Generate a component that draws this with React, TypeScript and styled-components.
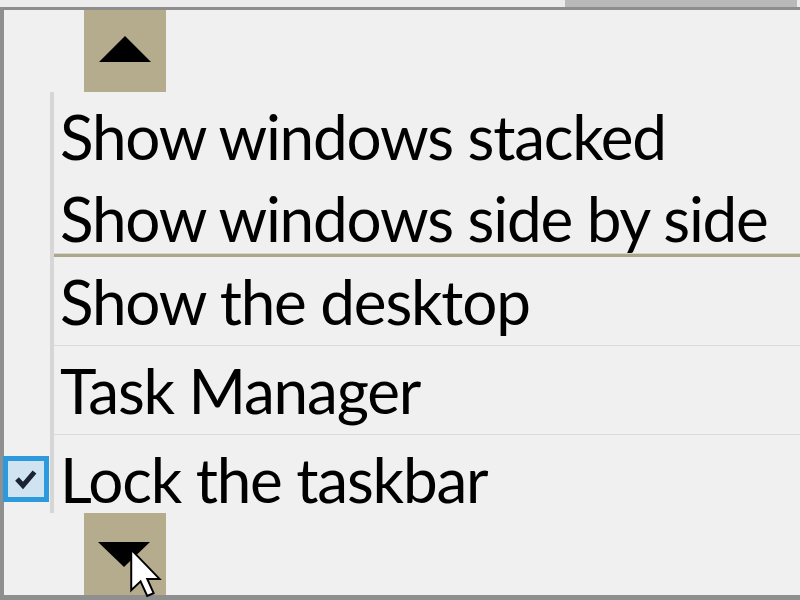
import React from "react";
import styled, { createGlobalStyle } from "styled-components";

const Global = createGlobalStyle`
  html, body { margin: 0; padding: 0; background: #f0f0f0; }
  body { overflow: hidden; }
`;

const Screen = styled.div`
  width: 800px;
  height: 600px;
  display: flex;
  flex-direction: column;
  background: #f0f0f0;
  font-family: Lato, "Open Sans", sans-serif;
  overflow: hidden;
`;

const TopStrip = styled.div`
  height: 7px;
  display: flex;
  background: #ececec;
`;

const TopTab = styled.div`
  margin-left: 565px;
  width: 232px;
  background: #b9b9b9;
`;

const Frame = styled.div`
  flex: 1;
  display: flex;
  flex-direction: column;
  border-top: 3px solid #8d8d8d;
  border-left: 4px solid #8f8f8f;
  border-bottom: 5px solid #8f8f8f;
  background: #f0f0f0;
  min-height: 0;
`;

const ScrollRow = styled.div`
  height: 82px;
  padding-left: 80px;
  display: flex;
  flex-shrink: 0;
`;

const ScrollButton = styled.div`
  position: relative;
  width: 82px;
  height: 82px;
  background: #b4ac8d;
  display: flex;
  align-items: center;
  justify-content: center;
`;

const Arrow = styled.div<{ $down?: boolean }>`
  width: 0;
  height: 0;
  border-left: 26px solid transparent;
  border-right: 26px solid transparent;
  ${(p) =>
    p.$down
      ? `border-top: 25px solid #000; margin-top: 1px; margin-left: -2px;`
      : `border-bottom: 26px solid #000; margin-top: -4px;`}
`;

const Cursor = styled.svg`
  position: absolute;
  left: 46px;
  top: 35px;
  overflow: visible;
`;

const Menu = styled.div`
  flex: 1;
  display: flex;
  flex-direction: column;
  min-height: 0;
`;

const Item = styled.div<{ $h: number }>`
  height: ${(p) => p.$h}px;
  display: flex;
  flex-shrink: 0;
`;

const Gutter = styled.div`
  width: 46px;
  flex-shrink: 0;
  border-right: 4px solid #d6d6d6;
  display: flex;
  align-items: flex-start;
  padding-top: 21px;
  box-sizing: content-box;
`;

const Label = styled.div<{ $sep?: "strong" | "light" }>`
  flex: 1;
  min-width: 0;
  padding-left: 6px;
  font-size: 62px;
  letter-spacing: -1.2px;
  line-height: 82px;
  padding-top: 3px;
  color: #000;
  white-space: nowrap;
  ${(p) =>
    p.$sep === "strong"
      ? `border-bottom: 3px solid #aca78c; box-shadow: inset 0 -1px 0 #d8d6c8;`
      : p.$sep === "light"
      ? `border-bottom: 1px solid #dadada;`
      : ``}
`;

const Check = styled.div`
  width: 36px;
  height: 36px;
  border: 5px solid #2d9ade;
  background: #cfe3f1;
  margin-left: -1px;
  display: flex;
  align-items: center;
  justify-content: center;
`;

const items: { text: string; h: number; sep?: "strong" | "light"; checked?: boolean }[] = [
  { text: "Show windows stacked", h: 82 },
  { text: "Show windows side by side", h: 83, sep: "strong" },
  { text: "Show the desktop", h: 89, sep: "light" },
  { text: "Task Manager", h: 89, sep: "light" },
  { text: "Lock the taskbar", h: 78, checked: true },
];

export default function App() {
  return (
    <>
      <Global />
      <Screen>
        <TopStrip>
          <TopTab />
        </TopStrip>
        <Frame>
          <ScrollRow>
            <ScrollButton>
              <Arrow />
            </ScrollButton>
          </ScrollRow>
          <Menu>
            {items.map((it) => (
              <Item key={it.text} $h={it.h}>
                <Gutter>
                  {it.checked && (
                    <Check>
                      <svg width="24" height="22" viewBox="0 0 24 22">
                        <path d="M3 11 L9 17.5 L20.5 4" fill="none" stroke="#1b2433" strokeWidth="5" strokeLinecap="butt" strokeLinejoin="miter" />
                      </svg>
                    </Check>
                  )}
                </Gutter>
                <Label $sep={it.sep}>{it.text}</Label>
              </Item>
            ))}
          </Menu>
          <ScrollRow>
            <ScrollButton>
              <Arrow $down />
              <Cursor width="32" height="50" viewBox="0 0 13 20">
                <path
                  d="M0.5 0.5 L0.5 17 L4.3 13.4 L7 19.3 L9.6 18.2 L7 12.4 L12 12.4 Z"
                  fill="#fff"
                  stroke="#000"
                  strokeWidth="0.8"
                  strokeLinejoin="miter"
                />
              </Cursor>
            </ScrollButton>
          </ScrollRow>
        </Frame>
      </Screen>
    </>
  );
}
